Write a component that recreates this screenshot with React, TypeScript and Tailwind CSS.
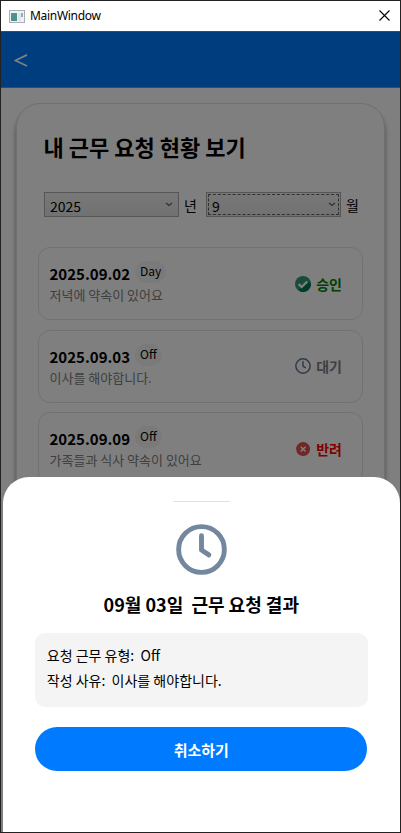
import type { ReactNode } from 'react';

type Status = 'approved' | 'pending' | 'rejected';

interface WorkRequest {
  date: string;
  type: string;
  reason: string;
  status: Status;
}

const requests: WorkRequest[] = [
  { date: '2025.09.02', type: 'Day', reason: '저녁에 약속이 있어요', status: 'approved' },
  { date: '2025.09.03', type: 'Off', reason: '이사를 해야합니다.', status: 'pending' },
  { date: '2025.09.09', type: 'Off', reason: '가족들과 식사 약속이 있어요', status: 'rejected' },
];

const statusText: Record<Status, { label: string; color: string }> = {
  approved: { label: '승인', color: 'text-[#008000]' },
  pending: { label: '대기', color: 'text-[#808080]' },
  rejected: { label: '반려', color: 'text-[#ff0000]' },
};

function ClockIcon({ size, stroke, color }: { size: number; stroke: number; color: string }) {
  return (
    <svg width={size} height={size} viewBox="0 0 52 52" fill="none" stroke={color} strokeWidth={stroke} strokeLinecap="round" strokeLinejoin="round">
      <circle cx="26" cy="26" r="23.3" />
      <path d="M26 12v14.5l7.5 5" />
    </svg>
  );
}

function StatusIcon({ status }: { status: Status }) {
  if (status === 'approved') {
    return (
      <svg width="16" height="16" viewBox="0 0 16 16">
        <circle cx="8" cy="8" r="8" fill="#329b73" />
        <path d="M13.6 5.2 16 7.7A8 8 0 0 1 5.8 15.7L4 13.5Z" fill="#007a50" />
        <path d="m3.7 8.2 3 2.8 5.7-5.5" fill="none" stroke="#fff" strokeWidth="2.3" />
      </svg>
    );
  }
  if (status === 'pending') {
    return <ClockIcon size={16} stroke={4.8} color="#5f7590" />;
  }
  return (
    <svg width="16" height="16" viewBox="0 0 16 16">
      <circle cx="8.1" cy="8.1" r="7" fill="#e0504f" />
      <path d="m5.7 5.7 4.8 4.8m0-4.8-4.8 4.8" stroke="#fff" strokeWidth="1.5" />
    </svg>
  );
}

function Select({ value, focused }: { value: string; focused?: boolean }) {
  return (
    <div className="h-[25px] w-[135px] shrink-0 border border-[#acacac] bg-linear-to-b from-[#f0f0f0] to-[#e3e3e3] p-px">
      <div className={`flex h-full items-center justify-between pl-[3px] ${focused ? 'border border-dashed border-[#606060] pr-[2px]' : 'border border-transparent pr-[3px]'}`}>
        <span className="pt-[2px] text-[14px] leading-5">{value}</span>
        <svg width="8" height="5" viewBox="0 0 8 5" fill="none" stroke="#606060" strokeWidth="1.3">
          <path d="m1 1 3 2.5L7 1" />
        </svg>
      </div>
    </div>
  );
}

function RequestCard({ request }: { request: WorkRequest }) {
  const { label, color } = statusText[request.status];
  return (
    <div className="flex h-[73px] shrink-0 items-center justify-between rounded-[12px] border border-[#e3e3e3] pr-[20px] pl-[10.5px]">
      <div className="h-[45px]">
        <div className="flex h-[23px] items-start">
          <span className="pt-[2px] text-[15px] leading-[22px] font-bold">{request.date}</span>
          <span className="ml-[5px] h-[22px] rounded-[11px] bg-[#f5f5f5] px-[5px] text-[12px] leading-[20px]">{request.type}</span>
        </div>
        <p className="pt-px text-[13px] leading-[20px] whitespace-nowrap text-[#808080]">{request.reason}</p>
      </div>
      <div className="flex items-center gap-[5px]">
        <StatusIcon status={request.status} />
        <span className={`text-[14px] leading-5 font-bold ${color}`}>{label}</span>
      </div>
    </div>
  );
}

function DetailRow({ label, children }: { label: string; children: ReactNode }) {
  return (
    <p className="h-[25px] text-[14px] leading-[25px] whitespace-pre">
      {label}:{'  '}
      {children}
    </p>
  );
}

function TitleBar() {
  return (
    <div className="flex h-[30px] shrink-0 items-center justify-between bg-white pr-[10px] pl-[8px]">
      <div className="flex items-center gap-[5px]">
        <svg width="16" height="13" viewBox="0 0 16 13">
          <rect x=".5" y=".5" width="15" height="12" fill="#f2f2f2" stroke="#a9afb8" />
          <rect x="2" y="3" width="6" height="8" fill="#4b9288" />
          <rect x="2" y="3" width="3" height="4" fill="#568bb0" />
          <rect x="9" y="3" width="3" height="8" fill="#dfe5e9" />
          <rect x="12" y="3" width="2" height="4" fill="#85bba3" />
        </svg>
        <span className="font-['Noto_Sans',sans-serif] text-[12px] leading-4 tracking-[-0.3px]">MainWindow</span>
      </div>
      <svg className="-mt-[2px]" width="11" height="11" viewBox="0 0 11 11" stroke="#000" strokeWidth="1.1">
        <path d="m.5.5 10 10m0-10-10 10" />
      </svg>
    </div>
  );
}

export default function App() {
  return (
    <div className="relative flex h-[833px] w-[401px] flex-col overflow-hidden border border-[#222] bg-white font-['Noto_Sans_CJK_KR',sans-serif] text-black">
      <TitleBar />
      <div className="relative flex min-h-0 flex-1 flex-col">
        <header className="flex h-[57px] shrink-0 items-center border-y border-[#5c9ce0] bg-[#007bff] pt-px pl-[13px]">
          <svg width="14" height="13" viewBox="0 0 14 13" fill="none" stroke="#fff" strokeWidth="1.8">
            <path d="M13 .9 1.5 6.5 13 12" />
          </svg>
        </header>

        <main className="min-h-0 flex-1 overflow-hidden px-[15px] pt-[15px]">
          <section className="flex h-[740px] flex-col rounded-[24px] border border-[#dedede] bg-white px-[21px] shadow-[0_5px_5px_rgba(0,0,0,0.4)]">
            <h1 className="mt-[26px] ml-[5.5px] text-[22px] leading-[32px] font-bold">내 근무 요청 현황 보기</h1>
            <div className="mt-[30px] ml-[6px] flex items-center text-[14px]">
              <Select value="2025" />
              <span className="ml-[5px] w-[22px] leading-5">년</span>
              <Select value="9" focused />
              <span className="ml-[5px] leading-5">월</span>
            </div>
            <div className="mt-[30px] flex w-[325px] flex-col gap-[9.5px]">
              {requests.map((request) => (
                <RequestCard key={request.date} request={request} />
              ))}
            </div>
          </section>
        </main>

        <div className="absolute inset-0 bg-black/50" />

        <div className="absolute right-0 bottom-0 left-[1.5px] flex h-[355px] flex-col items-center rounded-t-[26px] bg-white">
          <div className="mt-[24px] h-px w-[57px] bg-[#e2e2e2]" />
          <div className="mt-[22px]">
            <ClockIcon size={51} stroke={5} color="#73889e" />
          </div>
          <h2 className="mt-[16px] text-[18px] leading-[26px] font-bold whitespace-pre">{'09월 03일  근무 요청 결과'}</h2>
          <div className="mt-[16px] h-[74px] w-[333px] rounded-[10px] bg-[#f4f4f4] px-[12px] pt-[10px]">
            <DetailRow label="요청 근무 유형">Off</DetailRow>
            <DetailRow label="작성 사유">이사를 해야합니다.</DetailRow>
          </div>
          <button className="mt-[20px] h-[44px] w-[332px] rounded-full bg-[#007bff] pt-[2px] text-[15px] font-bold text-white">취소하기</button>
        </div>
      </div>
    </div>
  );
}
